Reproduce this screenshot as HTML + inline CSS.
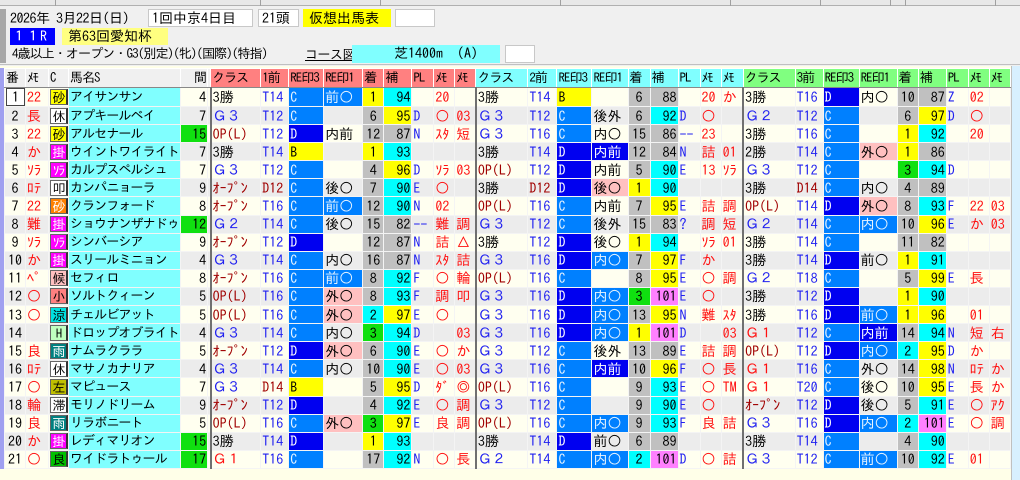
<!DOCTYPE html>
<html><head><meta charset="utf-8">
<style>
*{margin:0;padding:0;box-sizing:border-box}
body{width:1020px;height:480px;background:#f0f0f0;position:relative;overflow:hidden;font-family:"IPAGothic","Liberation Sans","Noto Sans CJK JP",sans-serif;font-size:14px;color:#000}
.tabs{position:absolute;top:0;left:0;width:1020px;height:6px;background:#e8e8e8;border-bottom:1px solid #b0b0b0}
.tabs i{position:absolute;top:0;height:6px;border-right:1px solid #a0a0a0}
.ab{position:absolute;white-space:nowrap;line-height:17px}
.box{position:absolute;background:#fff;border:1px solid #c8c8c8;height:18px;line-height:16px;padding-left:3px;white-space:nowrap}
.lbar{position:absolute;left:0;top:9px;width:6px;height:54px;background:#a8a8a8}
.area{position:absolute;left:0;top:66px;width:1020px;height:414px;background:#ffffe8}
.lb{position:absolute;left:0;top:68px;width:4px;height:401px;background:#a0a0f0}
.sb{position:absolute;left:1011px;top:66px;width:9px;height:414px;background:#d8f0ff;border-left:1px solid #c0c0c0}
table{position:absolute;left:4px;top:68px;border-collapse:collapse;table-layout:fixed;width:1007px}
td{height:18.1px;border:1px solid #f4f4f4;white-space:nowrap;overflow:hidden;padding:0 1px;line-height:16px}
tr.h td{height:19px;border:1px solid #fff;border-bottom:1px solid #888;font-size:13px;letter-spacing:-1px}
tr.o td{background:#fffff0}
tr.e td{background:#ececec}
tr td.nm{background:#80ffff;font-size:13px;letter-spacing:-0.9px}
tr td.cy{background:#00ffff}
tr td.ye{background:#ffff00}
tr td.gr{background:#c0c0c0}
tr td.mg{background:#ff80ff}
tr td.gn{background:#10e010}
tr td.bc{background:#0080ff;color:#e8f4ff}
tr td.bd{background:#0000f0;color:#fff}
tr td.pk{background:#ffc0c0}
tr td.h0{background:#f0f0f0}
tr td.h1{background:#ff8080}
tr td.h2{background:#80ffff}
tr td.h3{background:#80ff80}
.r{text-align:right}.c{text-align:center}
.bl{color:#2020f0}.dr{color:#a00000}.rd{color:#ff1010}
td.sp{border-left:1px solid #888;border-right:1px solid #888}
td.g{border-left:2px solid #707070}
b{font-weight:normal;display:inline-block;width:18px;height:16px;line-height:15px;text-align:center;border:1px solid #666;border-right:2px solid #333;font-size:13px;letter-spacing:-1px}
.y{background:#ffff00}.w{background:#fff}.m{background:#ff00ff;color:#fff}.or{background:#ff8000;color:#fff}.pi{background:#ffc0c0}.sa{background:#ff8080}.cya{background:#00e0e0}.lg{background:#c0ffc0}.tl{background:#008080;color:#fff}.ol{background:#c0c000}.gg{background:#00c000}
.one{display:inline-block;width:19px;border:1px solid #444;background:#fff;text-align:center}
</style></head><body>
<div class="tabs"><i style="left:55px"></i><i style="left:260px"></i><i style="left:380px"></i><i style="left:560px"></i><i style="left:730px"></i><i style="left:820px"></i><i style="left:890px"></i><i style="left:905px"></i><i style="left:995px"></i></div>
<div class="lbar"></div>
<div class="ab" style="left:10px;top:10px;font-size:14px;letter-spacing:-0.5px">2026年 3月22日(日)</div>
<div class="box" style="left:148px;top:9px;width:105px">1回中京4日目</div>
<div class="box" style="left:258px;top:9px;width:41px">21頭</div>
<div class="box" style="left:303px;top:9px;width:88px;background:#ffff00;border-color:#ffff00;padding-left:5px">仮想出馬表</div>
<div class="box" style="left:395px;top:9px;width:40px"></div>
<div class="ab" style="left:10px;top:28px;width:45px;height:17px;background:#0000ff;color:#fff;padding-left:2px">１１R</div>
<div class="ab" style="left:62px;top:28px;width:106px;height:17px;background:#ffff80;padding-left:6px">第63回愛知杯</div>
<div class="ab" style="left:12px;top:45px;font-size:13px;letter-spacing:-0.9px">4歳以上・オープン・G3(別定)(牝)(国際)(特指)</div>
<div class="ab" style="left:305px;top:46px;text-decoration:underline;font-size:13px;letter-spacing:-0.5px">コース図</div>
<div class="ab" style="left:352px;top:45px;width:148px;height:18px;background:#80ffff;padding-left:42px">芝1400m （A)</div>
<div class="box" style="left:505px;top:45px;width:30px"></div>
<div style="position:absolute;left:0;top:64px;width:1020px;height:1px;background:#c0c0c0"></div>
<div class="area"></div>
<div class="lb"></div>
<div class="sb"></div>
<table>
<colgroup>
<col style="width:21px"><col style="width:23px"><col style="width:20px"><col style="width:112px"><col style="width:27px"><col style="width:3px">
<col style="width:50px"><col style="width:28px"><col style="width:35px"><col style="width:39px"><col style="width:21px"><col style="width:28px"><col style="width:22px"><col style="width:21px"><col style="width:21px">
<col style="width:52px"><col style="width:29px"><col style="width:35px"><col style="width:36px"><col style="width:22px"><col style="width:28px"><col style="width:22px"><col style="width:21px"><col style="width:22px">
<col style="width:52px"><col style="width:28px"><col style="width:36px"><col style="width:38px"><col style="width:21px"><col style="width:28px"><col style="width:22px"><col style="width:21px"><col style="width:21px">
</colgroup>
<tr class="h"><td class="h0">番</td><td class="h0">ﾒﾓ</td><td class="h0">C</td><td class="h0">馬名S</td><td class="h0 r">間</td><td class="h0 sp"></td>
<td class="h1 g">クラス</td><td class="h1">1前</td><td class="h1">RE印3</td><td class="h1">RE印1</td><td class="h1">着</td><td class="h1">補</td><td class="h1">PL</td><td class="h1">ﾒﾓ</td><td class="h1">ﾒﾓ</td>
<td class="h2 g">クラス</td><td class="h2">2前</td><td class="h2">RE印3</td><td class="h2">RE印1</td><td class="h2">着</td><td class="h2">補</td><td class="h2">PL</td><td class="h2">ﾒﾓ</td><td class="h2">ﾒﾓ</td>
<td class="h3 g">クラス</td><td class="h3">3前</td><td class="h3">RE印3</td><td class="h3">RE印1</td><td class="h3">着</td><td class="h3">補</td><td class="h3">PL</td><td class="h3">ﾒﾓ</td><td class="h3">ﾒﾓ</td></tr>

<tr class="o"><td><span class="one">1</span></td><td class="rd">22</td><td><b class="y">砂</b></td><td class="nm">アイサンサン</td><td class="r">4</td><td class="sp"></td>
<td class="g">3勝</td><td class="bl">T14</td><td class="bc">C</td><td class="bc">前○</td><td class="ye c">1</td><td class="cy r">94</td><td></td><td class="rd">20</td><td></td>
<td class="g">3勝</td><td class="bl">T14</td><td class="ye">B</td><td></td><td class="gr c">6</td><td class="gr r">88</td><td></td><td class="rd">20</td><td class="rd">か</td>
<td class="g">3勝</td><td class="bl">T16</td><td class="bd">D</td><td>内○</td><td class="gr c">10</td><td class="gr r">87</td><td class="bl">Z</td><td class="rd">02</td><td></td></tr>

<tr class="e"><td class="c">2</td><td class="rd">長</td><td><b class="w">休</b></td><td class="nm">アプキールベイ</td><td class="r">7</td><td class="sp"></td>
<td class="g bl">Ｇ３</td><td class="bl">T12</td><td class="bc">C</td><td></td><td class="gr c">6</td><td class="ye r">95</td><td class="bl">D</td><td class="rd">○</td><td class="rd">03</td>
<td class="g bl">Ｇ３</td><td class="bl">T12</td><td class="bc">C</td><td>後外</td><td class="gr c">6</td><td class="cy r">92</td><td class="bl">D</td><td class="rd">○</td><td></td>
<td class="g bl">Ｇ２</td><td class="bl">T12</td><td class="bc">C</td><td></td><td class="gr c">6</td><td class="ye r">97</td><td class="bl">D</td><td class="rd">○</td><td></td></tr>

<tr class="o"><td class="c">3</td><td class="rd">22</td><td><b class="y">砂</b></td><td class="nm">アルセナール</td><td class="gn r">15</td><td class="sp"></td>
<td class="g dr">OP(L)</td><td class="bl">T12</td><td class="bd">D</td><td>内前</td><td class="gr c">12</td><td class="gr r">87</td><td class="bl">N</td><td class="rd">ｽﾀ</td><td class="rd">短</td>
<td class="g bl">Ｇ３</td><td class="bl">T16</td><td class="bc">C</td><td>内○</td><td class="gr c">15</td><td class="gr r">86</td><td class="bl">--</td><td class="rd">23</td><td></td>
<td class="g">3勝</td><td class="bl">T16</td><td class="bc">C</td><td></td><td class="ye c">1</td><td class="cy r">92</td><td></td><td class="rd">20</td><td></td></tr>

<tr class="e"><td class="c">4</td><td class="rd">か</td><td><b class="m">掛</b></td><td class="nm">ウイントワイライト</td><td class="r">7</td><td class="sp"></td>
<td class="g">3勝</td><td class="bl">T14</td><td class="ye">B</td><td></td><td class="ye c">1</td><td class="cy r">93</td><td></td><td></td><td></td>
<td class="g">3勝</td><td class="bl">T14</td><td class="bd">D</td><td class="bd">内前</td><td class="gr c">12</td><td class="gr r">84</td><td class="bl">N</td><td class="rd">詰</td><td class="rd">01</td>
<td class="g">2勝</td><td class="bl">T14</td><td class="bc">C</td><td class="pk">外○</td><td class="ye c">1</td><td class="gr r">86</td><td></td><td></td><td></td></tr>

<tr class="o"><td class="c">5</td><td class="rd">ｿﾗ</td><td><b class="m">ｿﾗ</b></td><td class="nm">カルプスペルシュ</td><td class="r">7</td><td class="sp"></td>
<td class="g bl">Ｇ３</td><td class="bl">T12</td><td class="bc">C</td><td></td><td class="gr c">4</td><td class="ye r">96</td><td class="bl">D</td><td class="rd">ｿﾗ</td><td class="rd">03</td>
<td class="g dr">OP(L)</td><td class="bl">T12</td><td class="bd">D</td><td>内前</td><td class="gr c">5</td><td class="cy r">90</td><td class="bl">E</td><td class="rd">13</td><td class="rd">ｿﾗ</td>
<td class="g bl">Ｇ３</td><td class="bl">T12</td><td class="bc">C</td><td></td><td class="gn c">3</td><td class="cy r">94</td><td class="bl">D</td><td></td><td></td></tr>

<tr class="e"><td class="c">6</td><td class="rd">ﾛﾃ</td><td><b class="w">叩</b></td><td class="nm">カンパニョーラ</td><td class="r">9</td><td class="sp"></td>
<td class="g dr">ｵｰﾌﾟﾝ</td><td class="dr">D12</td><td class="bc">C</td><td>後○</td><td class="gr c">7</td><td class="cy r">90</td><td class="bl">E</td><td class="rd">○</td><td></td>
<td class="g">3勝</td><td class="dr">D12</td><td class="bd">D</td><td class="pk">後○</td><td class="ye c">1</td><td class="cy r">90</td><td></td><td></td><td></td>
<td class="g">3勝</td><td class="dr">D14</td><td class="bc">C</td><td>内○</td><td class="gr c">4</td><td class="gr r">89</td><td></td><td></td><td></td></tr>

<tr class="o"><td class="c">7</td><td class="rd">22</td><td><b class="or">砂</b></td><td class="nm">クランフォード</td><td class="r">8</td><td class="sp"></td>
<td class="g dr">ｵｰﾌﾟﾝ</td><td class="bl">T16</td><td class="bc">C</td><td class="bc">前○</td><td class="gr c">12</td><td class="cy r">90</td><td class="bl">N</td><td class="rd">02</td><td></td>
<td class="g dr">OP(L)</td><td class="bl">T16</td><td class="bc">C</td><td>内前</td><td class="gr c">7</td><td class="ye r">95</td><td class="bl">E</td><td class="rd">詰</td><td class="rd">調</td>
<td class="g dr">OP(L)</td><td class="bl">T14</td><td class="bd">D</td><td class="pk">外○</td><td class="gr c">8</td><td class="cy r">93</td><td class="bl">F</td><td class="rd">22</td><td class="rd">03</td></tr>

<tr class="e"><td class="c">8</td><td class="rd">難</td><td><b class="m">掛</b></td><td class="nm">ショウナンザナドゥ</td><td class="gn r">12</td><td class="sp"></td>
<td class="g bl">Ｇ２</td><td class="bl">T14</td><td class="bc">C</td><td>後○</td><td class="gr c">15</td><td class="gr r">82</td><td class="bl">--</td><td class="rd">難</td><td class="rd">調</td>
<td class="g bl">Ｇ３</td><td class="bl">T12</td><td class="bc">C</td><td>後外</td><td class="gr c">15</td><td class="gr r">83</td><td class="bl">?</td><td class="rd">調</td><td class="rd">短</td>
<td class="g bl">Ｇ２</td><td class="bl">T14</td><td class="bc">C</td><td class="bc">内○</td><td class="gr c">10</td><td class="ye r">96</td><td class="bl">E</td><td class="rd">か</td><td class="rd">03</td></tr>

<tr class="o"><td class="c">9</td><td class="rd">ｿﾗ</td><td><b class="m">ｿﾗ</b></td><td class="nm">シンバーシア</td><td class="r">9</td><td class="sp"></td>
<td class="g dr">ｵｰﾌﾟﾝ</td><td class="bl">T12</td><td class="bd">D</td><td></td><td class="gr c">12</td><td class="gr r">87</td><td class="bl">N</td><td class="rd">詰</td><td class="rd">△</td>
<td class="g">3勝</td><td class="bl">T12</td><td class="bd">D</td><td>後○</td><td class="ye c">1</td><td class="cy r">94</td><td></td><td class="rd">ｿﾗ</td><td class="rd">01</td>
<td class="g">3勝</td><td class="bl">T14</td><td class="bc">C</td><td></td><td class="gr c">11</td><td class="gr r">82</td><td></td><td></td><td></td></tr>

<tr class="e"><td class="c">10</td><td class="rd">か</td><td><b class="m">掛</b></td><td class="nm">スリールミニョン</td><td class="r">4</td><td class="sp"></td>
<td class="g bl">Ｇ３</td><td class="bl">T14</td><td class="bc">C</td><td>内○</td><td class="gr c">16</td><td class="gr r">87</td><td class="bl">N</td><td class="rd">ｽﾀ</td><td class="rd">詰</td>
<td class="g bl">Ｇ３</td><td class="bl">T16</td><td class="bd">D</td><td class="bc">内○</td><td class="gr c">7</td><td class="ye r">97</td><td class="bl">F</td><td class="rd">か</td><td></td>
<td class="g">3勝</td><td class="bl">T14</td><td class="bd">D</td><td>前○</td><td class="ye c">1</td><td class="cy r">91</td><td></td><td></td><td></td></tr>

<tr class="o"><td class="c">11</td><td class="rd">ﾍﾟ</td><td><b class="pi">候</b></td><td class="nm">セフィロ</td><td class="r">8</td><td class="sp"></td>
<td class="g dr">ｵｰﾌﾟﾝ</td><td class="bl">T16</td><td class="bc">C</td><td class="bc">前○</td><td class="gr c">8</td><td class="cy r">92</td><td class="bl">F</td><td class="rd">○</td><td class="rd">輪</td>
<td class="g dr">OP(L)</td><td class="bl">T16</td><td class="bc">C</td><td></td><td class="gr c">8</td><td class="ye r">95</td><td class="bl">E</td><td class="rd">○</td><td class="rd">調</td>
<td class="g bl">Ｇ２</td><td class="bl">T18</td><td class="bc">C</td><td></td><td class="gr c">5</td><td class="ye r">99</td><td class="bl">E</td><td class="rd">長</td><td></td></tr>

<tr class="e"><td class="c">12</td><td class="rd">○</td><td><b class="sa">小</b></td><td class="nm">ソルトクィーン</td><td class="r">5</td><td class="sp"></td>
<td class="g dr">OP(L)</td><td class="bl">T16</td><td class="bc">C</td><td class="pk">外○</td><td class="gr c">8</td><td class="cy r">93</td><td class="bl">F</td><td class="rd">調</td><td class="rd">叩</td>
<td class="g bl">Ｇ３</td><td class="bl">T16</td><td class="bd">D</td><td class="bc">内○</td><td class="gn c">3</td><td class="mg r">101</td><td class="bl">E</td><td class="rd">○</td><td></td>
<td class="g">3勝</td><td class="bl">T12</td><td class="bd">D</td><td></td><td class="ye c">1</td><td class="cy r">90</td><td></td><td></td><td></td></tr>

<tr class="o"><td class="c">13</td><td class="rd">○</td><td><b class="cya">涼</b></td><td class="nm">チェルビアット</td><td class="r">5</td><td class="sp"></td>
<td class="g dr">OP(L)</td><td class="bl">T16</td><td class="bc">C</td><td class="pk">外○</td><td class="cy c">2</td><td class="ye r">97</td><td class="bl">E</td><td class="rd">○</td><td></td>
<td class="g bl">Ｇ３</td><td class="bl">T16</td><td class="bd">D</td><td class="bc">内○</td><td class="gr c">13</td><td class="ye r">95</td><td class="bl">N</td><td class="rd">難</td><td class="rd">ｽﾀ</td>
<td class="g">3勝</td><td class="bl">T16</td><td class="bd">D</td><td class="bc">前○</td><td class="ye c">1</td><td class="ye r">96</td><td></td><td class="rd">01</td><td></td></tr>

<tr class="e"><td class="c">14</td><td class="rd"></td><td><b class="lg">H</b></td><td class="nm">ドロップオブライト</td><td class="r">4</td><td class="sp"></td>
<td class="g bl">Ｇ３</td><td class="bl">T14</td><td class="bc">C</td><td>内○</td><td class="gn c">3</td><td class="cy r">94</td><td class="bl">D</td><td></td><td class="rd">03</td>
<td class="g bl">Ｇ３</td><td class="bl">T16</td><td class="bd">D</td><td class="bc">内○</td><td class="ye c">1</td><td class="mg r">101</td><td class="bl">D</td><td></td><td class="rd">03</td>
<td class="g rd">Ｇ１</td><td class="bl">T12</td><td class="bc">C</td><td class="bd">内前</td><td class="gr c">14</td><td class="cy r">94</td><td class="bl">N</td><td class="rd">短</td><td class="rd">右</td></tr>

<tr class="o"><td class="c">15</td><td class="rd">良</td><td><b class="tl">雨</b></td><td class="nm">ナムラクララ</td><td class="r">5</td><td class="sp"></td>
<td class="g dr">ｵｰﾌﾟﾝ</td><td class="bl">T12</td><td class="bd">D</td><td class="pk">外○</td><td class="gr c">6</td><td class="cy r">90</td><td class="bl">E</td><td class="rd">○</td><td class="rd">か</td>
<td class="g bl">Ｇ３</td><td class="bl">T12</td><td class="bc">C</td><td>後外</td><td class="gr c">13</td><td class="gr r">89</td><td class="bl">E</td><td class="rd">詰</td><td class="rd">調</td>
<td class="g dr">OP(L)</td><td class="bl">T12</td><td class="bd">D</td><td class="bc">内○</td><td class="cy c">2</td><td class="ye r">95</td><td class="bl">D</td><td class="rd">か</td><td></td></tr>

<tr class="e"><td class="c">16</td><td class="rd">ﾛﾃ</td><td><b class="w">休</b></td><td class="nm">マサノカナリア</td><td class="r">4</td><td class="sp"></td>
<td class="g bl">Ｇ３</td><td class="bl">T14</td><td class="bc">C</td><td>内○</td><td class="gr c">10</td><td class="cy r">90</td><td class="bl">E</td><td class="rd">○</td><td class="rd">03</td>
<td class="g bl">Ｇ３</td><td class="bl">T16</td><td class="bc">C</td><td class="bd">内前</td><td class="gr c">10</td><td class="ye r">96</td><td class="bl">F</td><td class="rd">○</td><td class="rd">長</td>
<td class="g rd">Ｇ１</td><td class="bl">T16</td><td class="bc">C</td><td>外○</td><td class="gr c">14</td><td class="ye r">98</td><td class="bl">N</td><td class="rd">ﾛﾃ</td><td class="rd">か</td></tr>

<tr class="o"><td class="c">17</td><td class="rd">○</td><td><b class="ol">左</b></td><td class="nm">マピュース</td><td class="r">7</td><td class="sp"></td>
<td class="g bl">Ｇ３</td><td class="dr">D14</td><td class="ye">B</td><td></td><td class="gr c">5</td><td class="ye r">95</td><td class="bl">D</td><td class="rd">ﾀﾞ</td><td class="rd">◎</td>
<td class="g dr">OP(L)</td><td class="bl">T16</td><td class="bc">C</td><td></td><td class="gr c">9</td><td class="cy r">93</td><td class="bl">E</td><td class="rd">○</td><td class="rd">TM</td>
<td class="g rd">Ｇ１</td><td class="bl">T20</td><td class="bc">C</td><td>後○</td><td class="gr c">10</td><td class="ye r">95</td><td class="bl">E</td><td class="rd">長</td><td class="rd">か</td></tr>

<tr class="e"><td class="c">18</td><td class="rd">輪</td><td><b class="w">滞</b></td><td class="nm">モリノドリーム</td><td class="r">9</td><td class="sp"></td>
<td class="g dr">ｵｰﾌﾟﾝ</td><td class="bl">T12</td><td class="bd">D</td><td></td><td class="gr c">4</td><td class="cy r">92</td><td class="bl">E</td><td class="rd">○</td><td class="rd">調</td>
<td class="g bl">Ｇ３</td><td class="bl">T12</td><td class="bc">C</td><td></td><td class="gr c">9</td><td class="cy r">90</td><td class="bl">E</td><td class="rd">○</td><td></td>
<td class="g dr">ｵｰﾌﾟﾝ</td><td class="bl">T12</td><td class="bd">D</td><td>後○</td><td class="gr c">5</td><td class="cy r">91</td><td class="bl">E</td><td class="rd">○</td><td class="rd">ｱｸ</td></tr>

<tr class="o"><td class="c">19</td><td class="rd">良</td><td><b class="tl">雨</b></td><td class="nm">リラボニート</td><td class="r">5</td><td class="sp"></td>
<td class="g dr">OP(L)</td><td class="bl">T16</td><td class="bc">C</td><td class="pk">外○</td><td class="gn c">3</td><td class="ye r">97</td><td class="bl">E</td><td class="rd">良</td><td class="rd">調</td>
<td class="g dr">OP(L)</td><td class="bl">T16</td><td class="bc">C</td><td class="bc">内○</td><td class="gr c">9</td><td class="cy r">93</td><td class="bl">F</td><td class="rd">良</td><td class="rd">詰</td>
<td class="g bl">Ｇ３</td><td class="bl">T16</td><td class="bd">D</td><td class="bc">内○</td><td class="cy c">2</td><td class="mg r">101</td><td class="bl">E</td><td class="rd">○</td><td class="rd">調</td></tr>

<tr class="e"><td class="c">20</td><td class="rd">か</td><td><b class="m">掛</b></td><td class="nm">レディマリオン</td><td class="gn r">15</td><td class="sp"></td>
<td class="g">3勝</td><td class="bl">T14</td><td class="bd">D</td><td></td><td class="ye c">1</td><td class="cy r">93</td><td></td><td></td><td></td>
<td class="g">3勝</td><td class="bl">T14</td><td class="bd">D</td><td>前○</td><td class="gr c">6</td><td class="gr r">89</td><td></td><td></td><td></td>
<td class="g">3勝</td><td class="bl">T14</td><td class="bc">C</td><td></td><td class="gr c">4</td><td class="cy r">90</td><td></td><td></td><td></td></tr>

<tr class="o"><td class="c">21</td><td class="rd">○</td><td><b class="gg">良</b></td><td class="nm">ワイドラトゥール</td><td class="gn r">17</td><td class="sp"></td>
<td class="g rd">Ｇ１</td><td class="bl">T16</td><td class="bc">C</td><td></td><td class="gr c">17</td><td class="cy r">92</td><td class="bl">N</td><td class="rd">○</td><td class="rd">長</td>
<td class="g bl">Ｇ２</td><td class="bl">T14</td><td class="bc">C</td><td class="bc">内○</td><td class="cy c">2</td><td class="mg r">101</td><td class="bl">D</td><td class="rd">○</td><td class="rd">詰</td>
<td class="g bl">Ｇ３</td><td class="bl">T12</td><td class="bc">C</td><td class="bc">前○</td><td class="gr c">10</td><td class="cy r">92</td><td class="bl">E</td><td class="rd">01</td><td></td></tr>
</table>
</body></html>
